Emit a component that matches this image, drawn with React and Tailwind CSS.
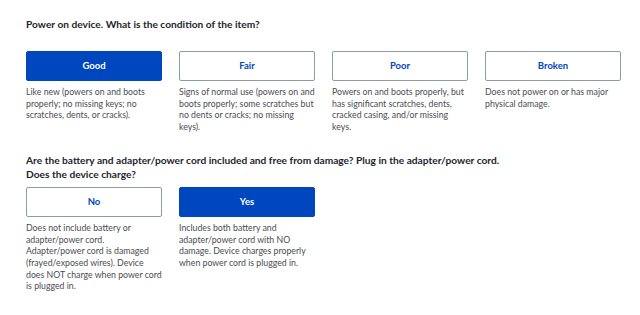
import React from "react";

const CONDITIONS = [
  { label: "Good", desc: ["Like new (powers on and boots properly; no missing keys; no scratches, dents, or cracks)."], active: true },
  { label: "Fair", desc: ["Signs of normal use (powers on and boots properly; some scratches but no dents or cracks; no missing keys)."] },
  { label: "Poor", desc: ["Powers on and boots properly, but has significant scratches, dents, cracked casing, and/or missing keys."] },
  { label: "Broken", desc: ["Does not power on or has major physical damage."] },
];

const CHARGE = [
  {
    label: "No",
    desc: [
      "Does not include battery or adapter/power cord.",
      "Adapter/power cord is damaged (frayed/exposed wires). Device does NOT charge when power cord is plugged in.",
    ],
  },
  { label: "Yes", desc: ["Includes both battery and adapter/power cord with NO damage. Device charges properly when power cord is plugged in."], active: true },
];

function Option({ label, desc, active }) {
  return (
    <div className="flex flex-col">
      <button
        className={
          active
            ? "h-[30px] rounded-[2px] bg-[#0046be] text-white text-[9.5px] font-bold border border-[#0046be]"
            : "h-[30px] rounded-[2px] bg-white text-[#0046be] text-[9.5px] font-bold border border-[#8d9aaa]"
        }
      >
        {label}
      </button>
      <div className="mt-[5px] text-[8.75px] leading-[11.7px] text-[#4a4d52]">
        {desc.map((d) => (
          <p key={d}>{d}</p>
        ))}
      </div>
    </div>
  );
}

export default function App() {
  return (
    <div className="w-[640px] h-[315px] bg-white px-[26px] pt-[18px] font-['Lato',sans-serif] text-[#1d252c]">
      <h2 className="text-[10.2px] leading-[13px] font-bold">
        Power on device. What is the condition of the item?
      </h2>
      <div className="mt-[20px] grid grid-cols-[136px_136px_136px_136px] gap-x-[17px]">
        {CONDITIONS.map((c) => (
          <Option key={c.label} {...c} />
        ))}
      </div>
      <h2 className="mt-[20px] text-[10.2px] leading-[14px] font-bold">
        Are the battery and adapter/power cord included and free from damage? Plug in the adapter/power cord.
        <br />
        Does the device charge?
      </h2>
      <div className="mt-[6px] grid grid-cols-[136px_136px] gap-x-[17px]">
        {CHARGE.map((c) => (
          <Option key={c.label} {...c} />
        ))}
      </div>
    </div>
  );
}
